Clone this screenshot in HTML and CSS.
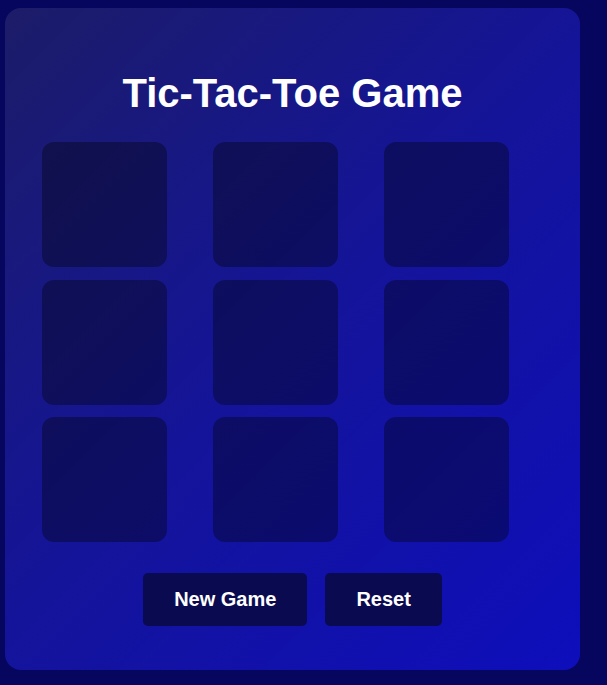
FILE: index.html
```html
<!DOCTYPE html>
<html lang="en">
<head>
<meta charset="utf-8">
<title>Tic-Tac-Toe Game</title>
<link rel="stylesheet" href="styles.css">
</head>
<body>
<div class="card">
  <h1 class="title">Tic-Tac-Toe Game</h1>
  <div class="board">
    <div class="cell"></div>
    <div class="cell"></div>
    <div class="cell"></div>
    <div class="cell"></div>
    <div class="cell"></div>
    <div class="cell"></div>
    <div class="cell"></div>
    <div class="cell"></div>
    <div class="cell"></div>
  </div>
  <div class="controls">
    <button class="btn">New Game</button>
    <button class="btn">Reset</button>
  </div>
</div>
</body>
</html>
```
FILE: styles.css
```css
html, body {
  margin: 0;
  padding: 0;
}
body {
  background: #06065f;
  font-family: "Liberation Sans", Arial, sans-serif;
  width: 607px;
  height: 685px;
  overflow: hidden;
  padding: 8px 0 0 5px;
  box-sizing: border-box;
}
.card {
  width: 575px;
  height: 662px;
  box-sizing: border-box;
  border-radius: 16px;
  background: linear-gradient(135deg, #1c1c68 0%, #14149a 50%, #0e0ebc 100%);
  padding: 62px 37px 0;
  display: flex;
  flex-direction: column;
}
.title {
  margin: 0;
  color: #ffffff;
  font-size: 40px;
  line-height: 46px;
  font-weight: bold;
  text-align: center;
}
.board {
  margin-top: 26px;
  display: grid;
  grid-template-columns: repeat(3, 125px);
  grid-auto-rows: 125px;
  column-gap: 46px;
  row-gap: 12.5px;
}
.cell {
  background: rgba(0, 0, 0, 0.34);
  border-radius: 12px;
}
.controls {
  margin-top: 30.5px;
  display: flex;
  justify-content: center;
  gap: 18px;
}
.btn {
  background: #0a0a50;
  color: #ffffff;
  border: none;
  border-radius: 5px;
  font-family: "Liberation Sans", Arial, sans-serif;
  font-size: 20px;
  font-weight: bold;
  line-height: 23px;
  padding: 15px 31px;
}
```
